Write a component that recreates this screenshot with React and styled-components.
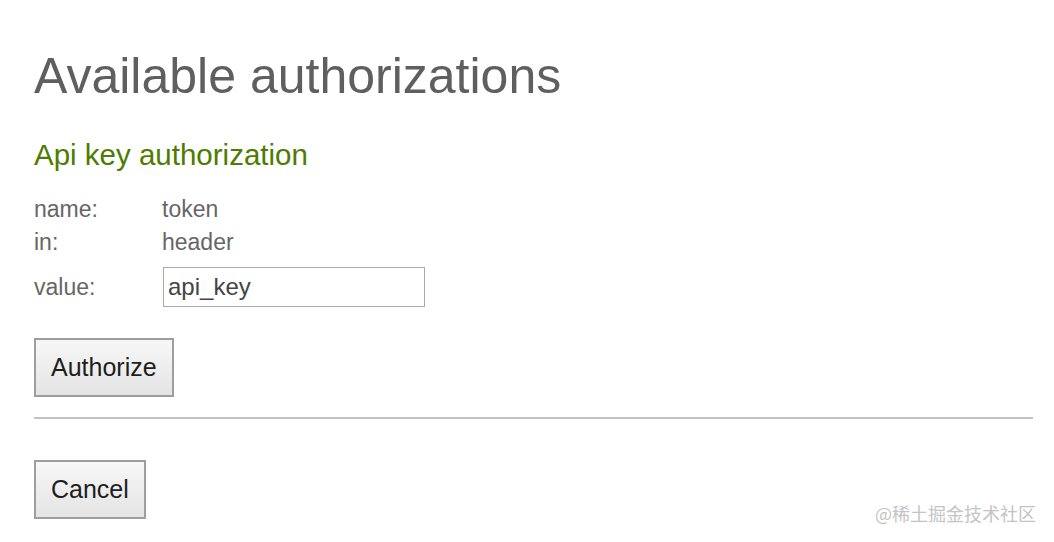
import React from "react";
import styled, { createGlobalStyle } from "styled-components";

const GlobalStyle = createGlobalStyle`
  body {
    margin: 0;
    background: #ffffff;
    font-family: "Liberation Sans", Arial, sans-serif;
  }
`;

const Page = styled.main`
  position: relative;
  width: 1054px;
  height: 542px;
  box-sizing: border-box;
  padding: 48px 21px 0 34px;
  overflow: hidden;
`;

const Title = styled.h1`
  margin: 0;
  font-size: 50px;
  font-weight: 400;
  line-height: 56px;
  color: #5f5f5f;
`;

const SubTitle = styled.h3`
  margin: 34px 0 0;
  font-size: 29.5px;
  font-weight: 400;
  line-height: 34px;
  color: #4d7c00;
`;

const Fields = styled.div`
  margin-top: 21px;
  display: grid;
  grid-template-columns: 128px auto;
  grid-auto-rows: minmax(33px, auto);
  align-items: center;
  justify-content: start;
  font-size: 23px;
  color: #666666;
`;

const Label = styled.span`
  line-height: 33px;
  margin-top: ${(p) => p.$top || 0}px;
`;

const Value = styled.span`
  line-height: 33px;
`;

const Input = styled.input`
  width: 262px;
  height: 40px;
  box-sizing: border-box;
  margin: 8px 0 0 1px;
  padding: 0 4px;
  border: 1px solid #aaaaaa;
  font-family: "Liberation Sans", Arial, sans-serif;
  font-size: 24px;
  color: #444444;
  outline: none;
`;

const Button = styled.button`
  display: block;
  height: 59px;
  box-sizing: border-box;
  padding: 0 15px;
  border: 2px solid #9e9e9e;
  border-radius: 0;
  background: linear-gradient(#f7f7f7, #e4e4e4);
  font-family: "Liberation Sans", Arial, sans-serif;
  font-size: 25px;
  color: #1e1e1e;
  margin-top: ${(p) => p.$top}px;
`;

const Divider = styled.hr`
  margin: 20px 0 0;
  border: none;
  border-top: 2px solid #c2c2c2;
`;

const Watermark = styled.div`
  position: absolute;
  right: 18px;
  bottom: 16px;
  font-family: "Noto Sans CJK SC", sans-serif;
  font-size: 18px;
  color: #c4c4c4;
`;

const App = () => (
  <>
    <GlobalStyle />
    <Page>
      <Title>Available authorizations</Title>
      <SubTitle>Api key authorization</SubTitle>
      <Fields>
        <Label>name:</Label>
        <Value>token</Value>
        <Label>in:</Label>
        <Value>header</Value>
        <Label $top={8}>value:</Label>
        <Input defaultValue="api_key" />
      </Fields>
      <Button $top={31}>Authorize</Button>
      <Divider />
      <Button $top={41}>Cancel</Button>
      <Watermark>@稀土掘金技术社区</Watermark>
    </Page>
  </>
);

export default App;
